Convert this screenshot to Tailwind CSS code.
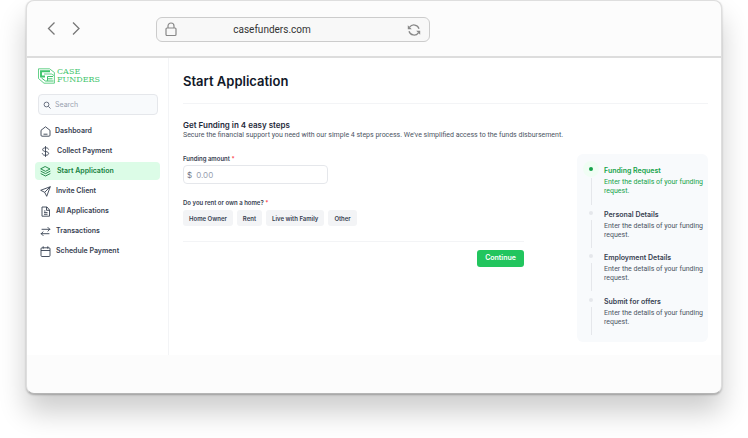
<!DOCTYPE html>
<html lang="en">
	<head>
		<meta charset="UTF-8" />
		<meta
			name="viewport"
			content="width=device-width, initial-scale=1.0"
		/>
		<title>Case Funders: Start Application</title>
		<script src="https://cdn.jsdelivr.net/npm/@tailwindcss/browser@4"></script>
	</head>
	<body class="bg-white font-['Inter',sans-serif] text-[#374151] overflow-hidden">
		<!-- BROWSER WINDOW -->
		<div class="ml-[26px] mr-[26px] mb-11 rounded-lg border border-[#dedede] border-b-[#b5b5b5] bg-[#fcfcfc] overflow-hidden shadow-[0_1px_2px_rgba(0,0,0,0.25),0_18px_28px_rgba(0,0,0,0.2)]">
			<!-- Toolbar -->
			<header class="h-[57px] flex items-center px-[19px] border-b-2 border-[#dddddd]">
				<nav class="flex gap-3 text-[#777777]">
					<button type="button" aria-label="Back">
						<svg class="w-3 h-4" viewBox="0 0 12 16" fill="none" stroke="currentColor" stroke-width="1.3">
							<path d="M8.5 1.500 2.500 7.500l6 6" />
						</svg>
					</button>
					<button type="button" aria-label="Forward">
						<svg class="w-3 h-4" viewBox="0 0 12 16" fill="none" stroke="currentColor" stroke-width="1.3">
							<path d="m3 1.500 6 6-6 6" />
						</svg>
					</button>
				</nav>
				<div class="ml-[74px] mt-[2px] w-[274px] h-[25px] flex items-center px-2 rounded-md border border-[#cccccc] bg-[#f8f8f8] text-[#888888]">
					<svg class="w-3 h-[15px]" viewBox="0 0 12 15" fill="none" stroke="currentColor" stroke-width="1.2">
						<rect x="1" y="6" width="10" height="7.500" rx="1" />
						<path d="M3 6V4a3 3 0 0 1 6 0v2" />
					</svg>
					<span class="flex-1 pr-10 text-center font-['Roboto',sans-serif] text-[10px] text-[#333333]">casefunders.com</span>
					<button type="button" aria-label="Reload">
						<svg class="w-[14px] h-[14px]" viewBox="0 0 14 14" fill="none" stroke="currentColor" stroke-width="1.3">
							<path d="M2.600 4.200A5.300 5.300 0 0 1 12 5.800M11.400 9.800A5.300 5.300 0 0 1 2 8.200" />
							<path d="M.8 2.200v4h4zM13.200 11.800v-4h-4z" fill="currentColor" stroke="none" />
						</svg>
					</button>
				</div>
			</header>
			<!-- Toolbar (END) -->

			<div class="flex h-[297px] bg-white">
				<!-- SIDEBAR -->
				<aside class="w-[142px] shrink-0 border-r border-gray-100 px-2 pt-[10px]">
					<a href="#" class="flex items-center gap-[2px] pl-[3px] text-[#3fc56c]">
						<svg class="w-[17px] h-4" viewBox="0 0 17 16" fill="none" stroke="currentColor">
							<path d="M.5.800h11L16.400 4.500v10.700H6L.5 10.500z" stroke-width=".8" />
							<path d="M12 3.200H3v5.300h4" stroke-width="1.900" />
							<path d="M6 6h7.500l2.500 1.500" stroke-width=".8" />
							<path d="M15 8.500H9.500v4.300M14.500 10.800h-5M15.500 13H7.500L3.500 10" stroke-width="1" />
						</svg>
						<span class="flex flex-col font-['DejaVu_Serif',serif] text-[8px] leading-[8px]">
							<span>CASE</span>
							<span>FUNDERS</span>
						</span>
					</a>
					<label class="mt-[10px] ml-[3px] mr-[2px] h-[21px] flex items-center gap-1 px-1 rounded border border-gray-200 bg-slate-50 text-gray-500">
						<svg class="w-2 h-2 shrink-0" viewBox="0 0 8 8" fill="none" stroke="currentColor">
							<circle cx="3.500" cy="3.500" r="2.400" />
							<path d="m5.300 5.300 2.200 2.200" />
						</svg>
						<input type="search" aria-label="Search" placeholder="Search" class="min-w-0 flex-1 text-[7px] leading-[10px] placeholder:text-gray-400 outline-none" />
					</label>
					<nav class="mt-[7px] flex flex-col gap-[2px] text-[7px] font-semibold">
						<a href="#" class="h-[18px] flex items-center gap-1 px-[5px]">
							<svg class="w-[11px] h-[11px]" viewBox="0 0 11 11" fill="none" stroke="currentColor" stroke-width=".9" stroke-linejoin="round">
								<path d="M1 4.300 5.500.8 10 4.300v4.900a1 1 0 0 1-1 1H2a1 1 0 0 1-1-1zM3.500 8.200h4" />
							</svg>
							Dashboard
						</a>
						<a href="#" class="h-[18px] flex items-center gap-[6px] px-[5px]">
							<svg class="w-[11px] h-[11px]" viewBox="0 0 11 11" fill="none" stroke="currentColor" stroke-width=".9" stroke-linecap="round">
								<path d="M5.500.5v10M8.500 3.200C8.200 2.200 7.200 1.800 5.500 1.800c-3.800 0-3.800 3.400 0 3.700 4.200.3 4.200 3.800 0 3.800-1.800 0-2.900-.6-3.200-1.700" />
							</svg>
							Collect Payment
						</a>
						<a href="#" class="h-[18px] flex items-center gap-[6px] px-[5px] rounded-sm bg-[#dcfce7] text-[#15803d]">
							<svg class="w-[11px] h-[11px]" viewBox="0 0 11 11" fill="none" stroke="currentColor" stroke-width=".9" stroke-linejoin="round" stroke-linecap="round">
								<path d="M5.500.7 10 3 5.500 5.300 1 3zM1 5.300l4.500 2.300L10 5.300M1 7.700 5.500 10 10 7.700" />
							</svg>
							Start Application
						</a>
						<a href="#" class="h-[18px] flex items-center gap-[5px] px-[5px]">
							<svg class="w-[11px] h-[11px]" viewBox="0 0 11 11" fill="none" stroke="currentColor" stroke-width=".9" stroke-linejoin="round">
								<path d="M10.300.7.7 4.300l4 2 2 4zM4.700 6.300 10.300.7" />
							</svg>
							Invite Client
						</a>
						<a href="#" class="h-[18px] flex items-center gap-[5px] px-[5px]">
							<svg class="w-[11px] h-[11px]" viewBox="0 0 11 11" fill="none" stroke="currentColor" stroke-width=".9" stroke-linejoin="round">
								<path d="M2 1v9.200h7.500V4L7 1zM6.500 1v3.300h3M4 5h1.500M4 6.600h3.500M4 8.300h3.500" />
							</svg>
							All Applications
						</a>
						<a href="#" class="h-[18px] flex items-center gap-[5px] px-[5px]">
							<svg class="w-[11px] h-[11px]" viewBox="0 0 11 11" fill="none" stroke="currentColor" stroke-width=".9" stroke-linecap="round" stroke-linejoin="round">
								<path d="M2 3.300h7.800M7.900 1.400l1.900 1.900-1.900 1.900M9 7.700H1.200M3.100 5.800 1.200 7.700l1.900 1.900" />
							</svg>
							Transactions
						</a>
						<a href="#" class="h-[18px] flex items-center gap-[5px] px-[5px]">
							<svg class="w-[11px] h-[11px]" viewBox="0 0 11 11" fill="none" stroke="currentColor" stroke-width=".9" stroke-linejoin="round">
								<rect x="1" y="1.800" width="9" height="8.700" rx="1" />
								<path d="M1 4.500h9M3.200.3v2.400M7.800.3v2.400" />
							</svg>
							Schedule Payment
						</a>
					</nav>
				</aside>
				<!-- SIDEBAR (END) -->

				<!-- MAIN CONTENT -->
				<main class="flex-1 min-w-0 pl-[14px] pr-[13px]">
					<h1 class="h-[46px] pt-[2px] flex items-center border-b border-gray-100 text-[13px] font-semibold text-gray-900">Start Application</h1>
					<h2 class="mt-4 text-[8px] leading-[10px] font-semibold text-gray-800">Get Funding in 4 easy steps</h2>
					<p class="font-['Roboto',sans-serif] text-[7px] leading-[10px] text-[#4b5563]">Secure the financial support you need with our simple 4 steps process. We've simplified access to the funds disbursement.</p>

					<div class="mt-[14px] flex items-start justify-between">
						<form class="w-[341px]">
							<label for="amount" class="block text-[6px] leading-[10px] font-semibold">Funding amount <span class="text-red-500">*</span></label>
							<div class="mt-[1px] w-[145px] h-[19px] flex items-center gap-1 px-[3px] rounded-sm border border-gray-200">
								<span class="text-[8px] text-gray-500">$</span>
								<input
									id="amount"
									type="text"
									placeholder="0.00"
									class="min-w-0 flex-1 text-[8px] leading-3 placeholder:text-gray-400 outline-none"
								/>
							</div>
							<fieldset class="mt-[14px]">
								<legend class="text-[6px] leading-[10px] font-semibold">Do you rent or own a home? <span class="text-red-500">*</span></legend>
								<div class="mt-[2px] flex gap-1 text-[6px] font-semibold">
									<button type="button" class="h-4 px-[6px] rounded-[3px] bg-gray-100">Home Owner</button>
									<button type="button" class="h-4 px-[6px] rounded-[3px] bg-gray-100">Rent</button>
									<button type="button" class="h-4 px-[6px] rounded-[3px] bg-gray-100">Live with Family</button>
									<button type="button" class="h-4 px-[6px] rounded-[3px] bg-gray-100">Other</button>
								</div>
							</fieldset>
							<div class="mt-[15px] pt-2 flex justify-end border-t border-gray-100">
								<button type="submit" class="w-[47px] h-[17px] rounded-[3px] bg-[#22c55e] text-white text-[7px] font-semibold">Continue</button>
							</div>
						</form>

						<!-- Steps -->
						<ol class="w-[131px] h-[188px] grid grid-rows-4 py-[7px] rounded-md bg-slate-50 font-['Roboto',sans-serif] text-[7px] leading-[9px] text-[#4b5563]">
							<li class="flex gap-[5px] pl-[6px] text-[#16a34a]">
								<div class="w-4 flex flex-col items-center gap-[1px]">
									<span class="w-4 h-4 flex items-center justify-center rounded-full bg-green-50"><span class="w-1 h-1 rounded-full bg-[#16a34a]"></span></span>
									<span class="w-px h-[27px] bg-gray-200"></span>
								</div>
								<div class="flex-1 pt-[5px]">
									<h3 class="font-['Inter',sans-serif] text-[7px] leading-[10px] font-semibold">Funding Request</h3>
									<p class="mt-[2px]">Enter the details of your funding request.</p>
								</div>
							</li>
							<li class="flex gap-[5px] pl-[6px]">
								<div class="w-4 pt-[6px] flex flex-col items-center gap-[5px]">
									<span class="w-1 h-1 rounded-full bg-gray-200"></span>
									<span class="w-px h-7 bg-gray-200"></span>
								</div>
								<div class="flex-1 pt-[5px]">
									<h3 class="font-['Inter',sans-serif] text-[7px] leading-[10px] font-semibold text-[#374151]">Personal Details</h3>
									<p class="mt-[2px]">Enter the details of your funding request.</p>
								</div>
							</li>
							<li class="flex gap-[5px] pl-[6px]">
								<div class="w-4 pt-[6px] flex flex-col items-center gap-[5px]">
									<span class="w-1 h-1 rounded-full bg-gray-200"></span>
									<span class="w-px h-7 bg-gray-200"></span>
								</div>
								<div class="flex-1 pt-[5px]">
									<h3 class="font-['Inter',sans-serif] text-[7px] leading-[10px] font-semibold text-[#374151]">Employment Details</h3>
									<p class="mt-[2px]">Enter the details of your funding request.</p>
								</div>
							</li>
							<li class="flex gap-[5px] pl-[6px]">
								<div class="w-4 pt-[6px] flex flex-col items-center gap-[5px]">
									<span class="w-1 h-1 rounded-full bg-gray-200"></span>
									<span class="w-px h-7 bg-gray-200"></span>
								</div>
								<div class="flex-1 pt-[5px]">
									<h3 class="font-['Inter',sans-serif] text-[7px] leading-[10px] font-semibold text-[#374151]">Submit for offers</h3>
									<p class="mt-[2px]">Enter the details of your funding request.</p>
								</div>
							</li>
						</ol>
						<!-- Steps (END) -->
					</div>
				</main>
				<!-- MAIN CONTENT (END) -->
			</div>
			<footer class="h-[38px]"></footer>
		</div>
		<!-- BROWSER WINDOW (END) -->
	</body>
</html>
